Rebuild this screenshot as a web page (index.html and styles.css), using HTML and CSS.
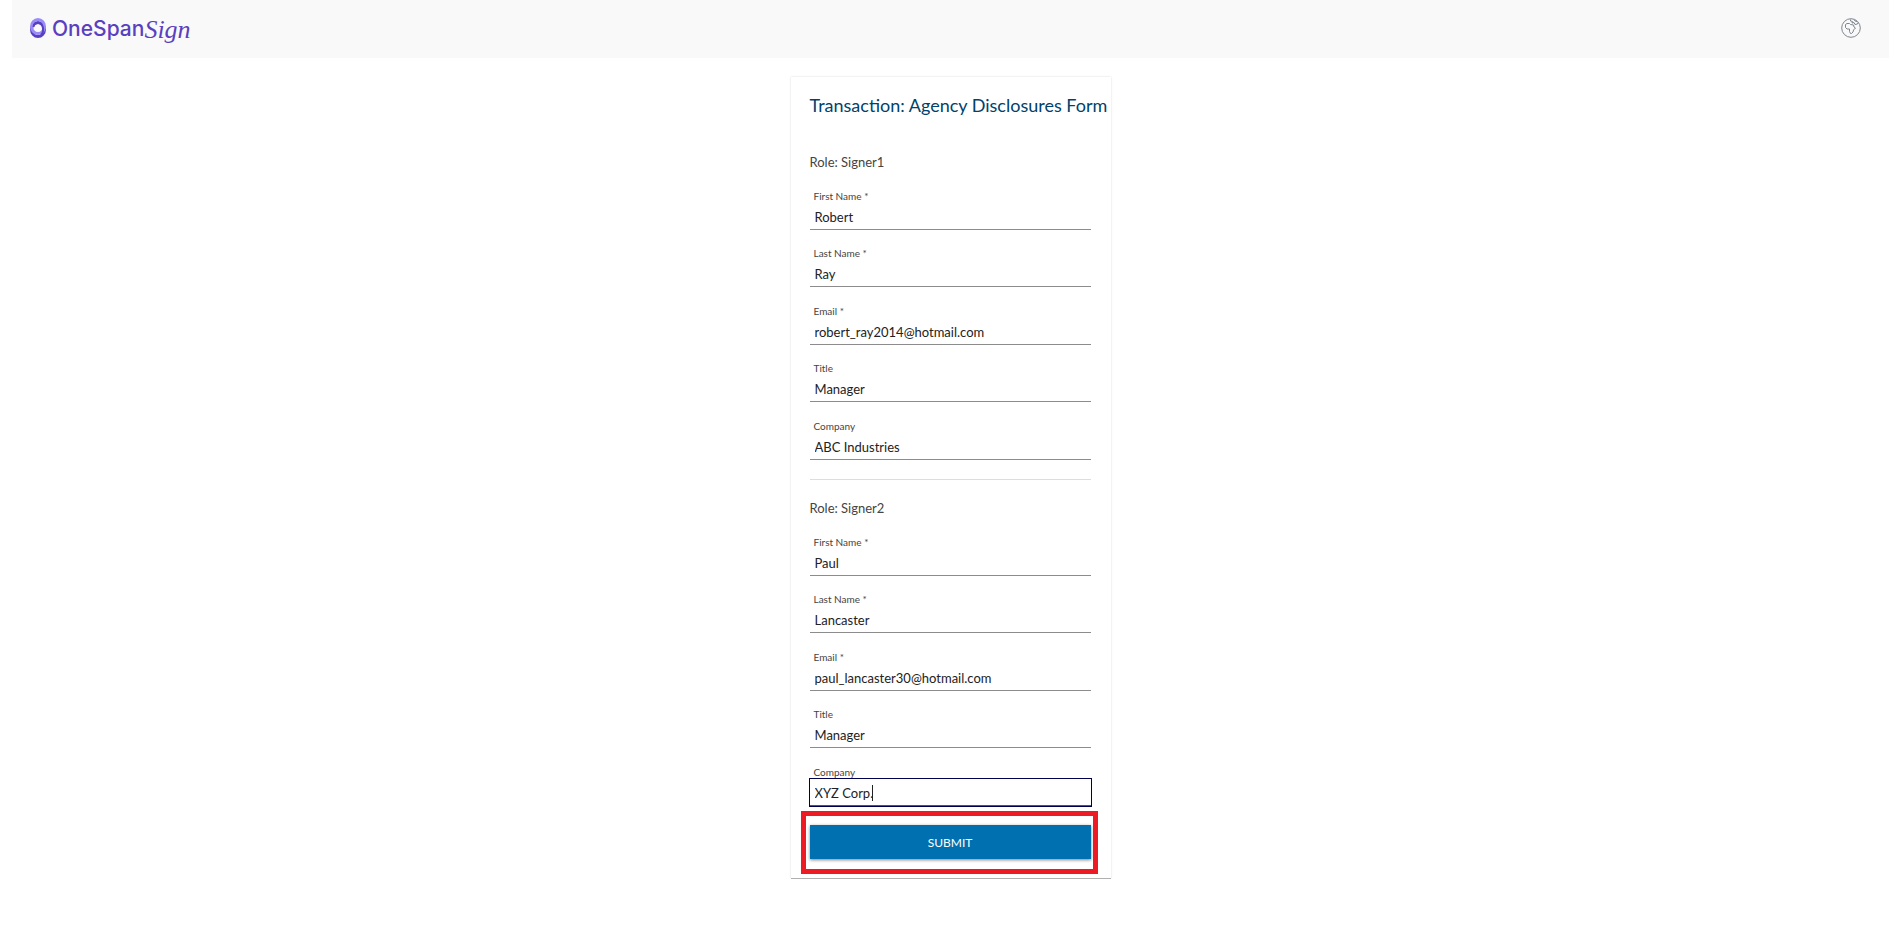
FILE: index.html
```html
<!DOCTYPE html>
<html lang="en">
<head>
    <meta charset="UTF-8">
    <title>OneSpan Sign</title>
    <link rel="stylesheet" href="styles.css">
</head>
<body>
    <header class="top-bar">
        <a href="#" class="logo">
            <svg class="logo-mark" width="16" height="20" viewBox="0 0 16 20">
                <ellipse cx="8" cy="11.500" rx="6.500" ry="7" fill="none" stroke="#5a3fc0" stroke-width="3"/>
                <ellipse cx="8" cy="8.500" rx="6.500" ry="7" fill="none" stroke="#9a8cf8" stroke-width="3"/>
                <path d="M3.500 9C4 3.500 12 3.500 13 10C13.500 13 12.500 15.500 11 17" fill="none" stroke="#5a3fc0" stroke-width="2"/>
            </svg>
            <span class="logo-name">OneSpan</span><span class="logo-sign">Sign</span>
        </a>
        <button type="button" class="language-button" aria-label="Language">
            <svg width="20" height="20" viewBox="0 0 20 20" fill="none" stroke="#7f8590" stroke-width="1">
                <circle cx="10" cy="10" r="9.300"/>
                <path d="M4.500 6.500L6 5.500H8.500L9.500 6.500L12.500 7L13 9L14.500 10L12.500 12L12 14L10.500 15.500H9.500L8.500 13.500V11H6L4.500 9.500Z"/>
                <path d="M9.500 1.500V3L11.500 3.500L11 5L13 4.500L14 6.500L16.500 6L17 4.500M13 1.500L14 3L16 3.500"/>
            </svg>
        </button>
    </header>

    <main class="card">
        <h1>Transaction: Agency Disclosures Form</h1>
        <form>
            <section class="signer">
                <h2>Role: Signer1</h2>
                <div class="field">
                    <label for="firstName1">First Name *</label>
                    <input type="text" id="firstName1" value="Robert" required>
                </div>
                <div class="field">
                    <label for="lastName1">Last Name *</label>
                    <input type="text" id="lastName1" value="Ray" required>
                </div>
                <div class="field">
                    <label for="email1">Email *</label>
                    <input type="email" id="email1" value="robert_ray2014@hotmail.com" required>
                </div>
                <div class="field">
                    <label for="title1">Title</label>
                    <input type="text" id="title1" value="Manager">
                </div>
                <div class="field">
                    <label for="company1">Company</label>
                    <input type="text" id="company1" value="ABC Industries">
                </div>
            </section>

            <hr>

            <section class="signer">
                <h2>Role: Signer2</h2>
                <div class="field">
                    <label for="firstName2">First Name *</label>
                    <input type="text" id="firstName2" value="Paul" required>
                </div>
                <div class="field">
                    <label for="lastName2">Last Name *</label>
                    <input type="text" id="lastName2" value="Lancaster" required>
                </div>
                <div class="field">
                    <label for="email2">Email *</label>
                    <input type="email" id="email2" value="paul_lancaster30@hotmail.com" required>
                </div>
                <div class="field">
                    <label for="title2">Title</label>
                    <input type="text" id="title2" value="Manager">
                </div>
                <div class="field active">
                    <label for="company2">Company</label>
                    <input type="text" id="company2" value="XYZ Corp.">
                    <span class="caret"></span>
                </div>
            </section>

            <div class="submit-row">
                <button type="submit" class="submit-button">SUBMIT</button>
                <span class="highlight"></span>
            </div>
        </form>
    </main>
</body>
</html>
```

FILE: styles.css
```css
* {
    margin: 0;
    padding: 0;
    box-sizing: border-box;
    font-family: Lato, sans-serif;
}

body {
    background: #fff;
    color: #222;
    padding: 0 12px;
}

.top-bar {
    height: 58px;
    padding: 0 28px 2px 18px;
    background: #f9f9f9;
    display: flex;
    align-items: center;
    justify-content: space-between;
}

.logo {
    display: flex;
    align-items: center;
    color: #5a3fc0;
    text-decoration: none;
}

.logo-mark {
    margin-right: 6px;
}

.logo-name {
    font-family: Inter, sans-serif;
    font-size: 21px;
    font-weight: 500;
}

.logo-sign {
    padding-top: 4px;
    font-family: "Liberation Serif", serif;
    font-size: 26px;
    font-style: italic;
}

.language-button {
    display: flex;
    border: none;
    background: none;
    cursor: pointer;
}

/* Form card */
.card {
    width: 320px;
    margin: 19px auto 0;
    padding: 16px 20px 19px 19px;
    border-bottom: 1px solid #b0b0b0;
    box-shadow: 0 0 2px rgba(0, 0, 0, 0.15);
}

h1 {
    color: #00426b;
    font-size: 18px;
    font-weight: 400;
    line-height: 24px;
    white-space: nowrap;
    margin-bottom: 35px;
}

h2 {
    color: #444;
    font-size: 13px;
    font-weight: 400;
    line-height: 20px;
    margin-bottom: 17px;
}

.signer {
    display: flex;
    flex-direction: column;
}

.field {
    position: relative;
    display: flex;
    flex-direction: column;
    margin-bottom: 16px;
}

.field:nth-of-type(even) {
    margin-bottom: 17px;
}

.field label {
    padding-left: 4px;
    color: #444;
    font-size: 10px;
    line-height: 14px;
}

.field input {
    height: 27px;
    padding: 2px 5px 0;
    border: none;
    border-bottom: 1px solid #8c8c8c;
    background: #fff;
    color: #222;
    font-size: 13px;
    outline: none;
}

.field.active input,
.field input:focus {
    border-bottom: 1px solid #0070b0;
    outline: 1px solid #00004f;
}

.field:last-child {
    margin-bottom: 19px;
}

.caret {
    position: absolute;
    left: 62px;
    bottom: 5px;
    width: 1px;
    height: 16px;
    background: #222;
}

hr {
    border: none;
    border-top: 1px solid #ddd;
    margin-bottom: 18px;
}

.submit-row {
    position: relative;
}

.submit-button {
    width: 100%;
    height: 34px;
    display: block;
    border: none;
    background: #0070b0;
    color: #fff;
    font-size: 12px;
    font-weight: 400;
    cursor: pointer;
    box-shadow: 0 1px 3px rgba(0, 0, 0, 0.5);
}

.highlight {
    position: absolute;
    inset: -14px -7px -15px -9px;
    border: 5px solid #ed1c24;
    pointer-events: none;
}
```
